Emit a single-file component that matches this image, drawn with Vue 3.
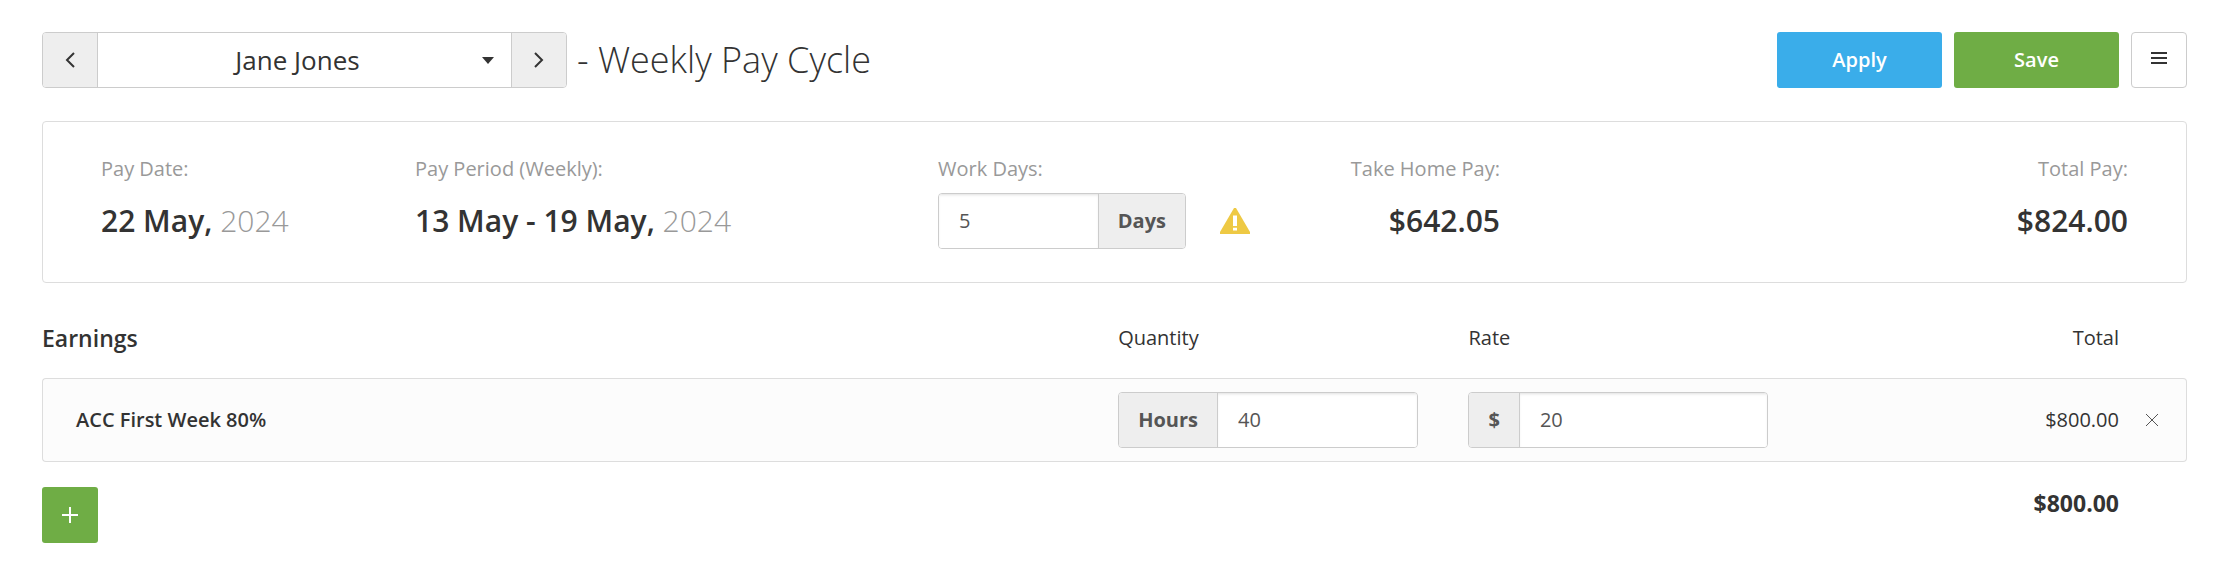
<script setup>
import { ref, computed } from 'vue'

const employees = ['Jane Jones']
const employee = ref(employees[0])
const workDays = ref('5')
const earnings = ref([{ id: 1, name: 'ACC First Week 80%', quantity: '40', rate: '20' }])

const money = (n) => '$' + n.toFixed(2)
const lineTotal = (line) => Number(line.quantity) * Number(line.rate)
const total = computed(() => earnings.value.reduce((sum, line) => sum + lineTotal(line), 0))

function addLine() {
  earnings.value.push({ id: Date.now(), name: 'Ordinary Time', quantity: '0', rate: '0' })
}
function removeLine(id) {
  earnings.value = earnings.value.filter((line) => line.id !== id)
}
</script>

<template>
  <main class="page">
    <header class="header">
      <div class="picker">
        <button type="button" class="step" aria-label="Previous employee">
          <svg width="10" height="16" viewBox="0 0 10 16"><path d="M9 1 2 8l7 7" /></svg>
        </button>
        <div class="picker-select">
          <select v-model="employee" aria-label="Employee">
            <option v-for="name in employees" :key="name">{{ name }}</option>
          </select>
          <svg class="caret" width="12" height="7" viewBox="0 0 12 7"><path d="M0 0h12L6 7z" /></svg>
        </div>
        <button type="button" class="step" aria-label="Next employee">
          <svg width="10" height="16" viewBox="0 0 10 16"><path d="m1 1 7 7-7 7" /></svg>
        </button>
      </div>
      <h1>- Weekly Pay Cycle</h1>
      <div class="actions">
        <button type="button" class="btn apply">Apply</button>
        <button type="button" class="btn save">Save</button>
        <button type="button" class="btn menu" aria-label="More actions">
          <svg width="16" height="12" viewBox="0 0 16 12"><path d="M0 0h16v2H0zM0 5h16v2H0zM0 10h16v2H0z" /></svg>
        </button>
      </div>
    </header>

    <section class="summary">
      <div class="fact">
        <span class="label">Pay Date:</span>
        <span class="value">22 May, <span class="year">2024</span></span>
      </div>
      <div class="fact">
        <span class="label">Pay Period (Weekly):</span>
        <span class="value">13 May - 19 May, <span class="year">2024</span></span>
      </div>
      <div class="fact">
        <label class="label" for="work-days">Work Days:</label>
        <div class="days">
          <div class="group">
            <input id="work-days" v-model="workDays" type="text" />
            <span class="addon after">Days</span>
          </div>
          <svg width="30" height="26" viewBox="0 0 30 26" role="img" aria-label="Warning">
            <path class="warn" d="M14 0h2l14 24v2H0v-2z" />
            <path class="mark" d="M13 7.500h4v10.500h-4zM13 19.800h4v2.800h-4z" />
          </svg>
        </div>
      </div>
      <div class="fact right">
        <span class="label">Take Home Pay:</span>
        <span class="value">$642.05</span>
      </div>
      <div class="fact right">
        <span class="label">Total Pay:</span>
        <span class="value">$824.00</span>
      </div>
    </section>

    <table class="earnings">
      <colgroup>
        <col />
        <col class="col-input" />
        <col class="col-input" />
        <col class="col-total" />
        <col class="col-remove" />
      </colgroup>
      <thead>
        <tr>
          <th scope="col" class="heading">Earnings</th>
          <th scope="col">Quantity</th>
          <th scope="col">Rate</th>
          <th scope="col" class="num">Total</th>
          <td></td>
        </tr>
      </thead>
      <tbody>
        <tr v-for="line in earnings" :key="line.id">
          <th scope="row">{{ line.name }}</th>
          <td>
            <div class="group">
              <label class="addon before" :for="'quantity-' + line.id">Hours</label>
              <input :id="'quantity-' + line.id" v-model="line.quantity" type="text" />
            </div>
          </td>
          <td>
            <div class="group">
              <label class="addon before" :for="'rate-' + line.id">$</label>
              <input :id="'rate-' + line.id" v-model="line.rate" type="text" />
            </div>
          </td>
          <td class="num">{{ money(lineTotal(line)) }}</td>
          <td class="remove">
            <button type="button" aria-label="Remove line" @click="removeLine(line.id)">
              <svg width="14" height="14" viewBox="0 0 14 14"><path d="m1 1 12 12M13 1 1 13" /></svg>
            </button>
          </td>
        </tr>
      </tbody>
      <tfoot>
        <tr>
          <td colspan="3">
            <button type="button" class="btn add" aria-label="Add earnings line" @click="addLine">
              <svg width="16" height="16" viewBox="0 0 16 16"><path d="M8 0v16M0 8h16" /></svg>
            </button>
          </td>
          <td class="num">{{ money(total) }}</td>
          <td></td>
        </tr>
      </tfoot>
    </table>
  </main>
</template>

<style>
body {
  background: #fff;
}
</style>

<style scoped>
.page {
  padding: 32px 53px 36px 42px;
  font-family: "Open Sans", "Noto Sans", sans-serif;
  font-size: 20px;
  line-height: 28px;
  color: #333;
}
.page * {
  box-sizing: border-box;
}
button,
input,
select {
  font: inherit;
  color: inherit;
  margin: 0;
}
button,
select {
  cursor: pointer;
}
svg {
  display: block;
  flex: none;
}

.header {
  display: flex;
  align-items: center;
  height: 56px;
}
.picker {
  display: flex;
  width: 525px;
  height: 56px;
  border: 1px solid #ccc;
  border-radius: 4px;
  overflow: hidden;
}
.step {
  display: flex;
  align-items: center;
  justify-content: center;
  width: 54px;
  padding: 0;
  border: 0;
  background: #eee;
}
.step path {
  fill: none;
  stroke: #333;
  stroke-width: 2;
}
.picker-select {
  position: relative;
  flex: 1;
  border: solid #ccc;
  border-width: 0 1px;
}
.picker-select select {
  width: 100%;
  height: 100%;
  padding: 0 32px 0 18px;
  border: 0;
  background: #fff;
  appearance: none;
  font-size: 26px;
  line-height: 40px;
  text-align: center;
  text-align-last: center;
}
.caret {
  position: absolute;
  top: 24px;
  right: 17px;
  fill: #333;
  pointer-events: none;
}
h1 {
  margin: 0 0 0 10px;
  font-size: 36px;
  font-weight: 300;
  line-height: 56px;
}
.actions {
  display: flex;
  gap: 12px;
  margin-left: auto;
}
.btn {
  display: flex;
  align-items: center;
  justify-content: center;
  height: 56px;
  padding: 0;
  border: 0;
  border-radius: 3px;
  color: #fff;
  font-weight: 600;
}
.apply {
  width: 165px;
  background: #3aadea;
}
.save {
  width: 165px;
  background: #6fad45;
}
.menu {
  width: 56px;
  border: 1px solid #ccc;
  border-radius: 4px;
  background: #fff;
  padding-bottom: 4px;
}
.menu path {
  fill: #333;
}

.summary {
  display: grid;
  grid-template-columns: 314fr 523fr 332fr 230fr 628fr;
  margin-top: 33px;
  padding: 33px 58px;
  border: 1px solid #ddd;
  border-radius: 4px;
}
.fact {
  display: flex;
  flex-direction: column;
  gap: 10px;
}
.right {
  text-align: right;
}
.label {
  color: #999;
}
.value {
  font-size: 30px;
  line-height: 56px;
  font-weight: 600;
  white-space: nowrap;
}
.year {
  font-weight: 300;
  color: #999;
}
.days {
  display: flex;
  align-items: center;
  gap: 34px;
}
.days .group {
  width: 248px;
}
.warn {
  fill: #eec944;
}
.mark {
  fill: #fff;
}

.group {
  display: flex;
  height: 56px;
  border: 1px solid #ccc;
  border-radius: 4px;
  background: #fff;
  overflow: hidden;
}
.group input {
  flex: 1;
  min-width: 0;
  padding: 0 20px;
  border: 0;
  outline: 0;
  background: #fff;
  box-shadow: inset 0 2px 3px -1px rgba(0, 0, 0, 0.12);
  color: #555;
}
.addon {
  display: flex;
  align-items: center;
  padding: 0 19px;
  background: #eee;
  color: #555;
  font-weight: 700;
}
.before {
  border-right: 1px solid #ccc;
}
.after {
  border-left: 1px solid #ccc;
}

.earnings {
  width: 100%;
  margin-top: 32px;
  table-layout: fixed;
  border-collapse: separate;
  border-spacing: 0;
}
.col-input {
  width: 16.33%;
}
.col-total {
  width: 14%;
}
.col-remove {
  width: 68px;
}
.earnings th,
.earnings td {
  padding: 0;
  text-align: left;
}
.earnings thead th {
  height: 63px;
  padding-bottom: 18px;
  font-weight: 400;
}
.earnings thead .heading {
  font-size: 23px;
  font-weight: 600;
}
.earnings tbody th,
.earnings tbody td {
  height: 84px;
  border: solid #ddd;
  border-width: 1px 0;
  background: #fcfcfc;
}
.earnings tbody th {
  padding-left: 33px;
  border-left-width: 1px;
  border-radius: 4px 0 0 4px;
  font-weight: 600;
}
.earnings tbody td:last-child {
  border-right-width: 1px;
  border-radius: 0 4px 4px 0;
}
.earnings .group {
  width: 300px;
}
.earnings .num {
  text-align: right;
}
.remove button {
  display: block;
  margin-left: 16px;
  padding: 10px;
  border: 0;
  background: none;
}
.remove path {
  fill: none;
  stroke: #555;
}
.earnings tfoot td {
  padding-top: 25px;
  vertical-align: top;
}
.earnings tfoot .num {
  font-size: 23px;
  line-height: 32px;
  font-weight: 700;
}
.add {
  width: 56px;
  background: #6fad45;
}
.add path {
  fill: none;
  stroke: #fff;
  stroke-width: 2;
}
</style>
